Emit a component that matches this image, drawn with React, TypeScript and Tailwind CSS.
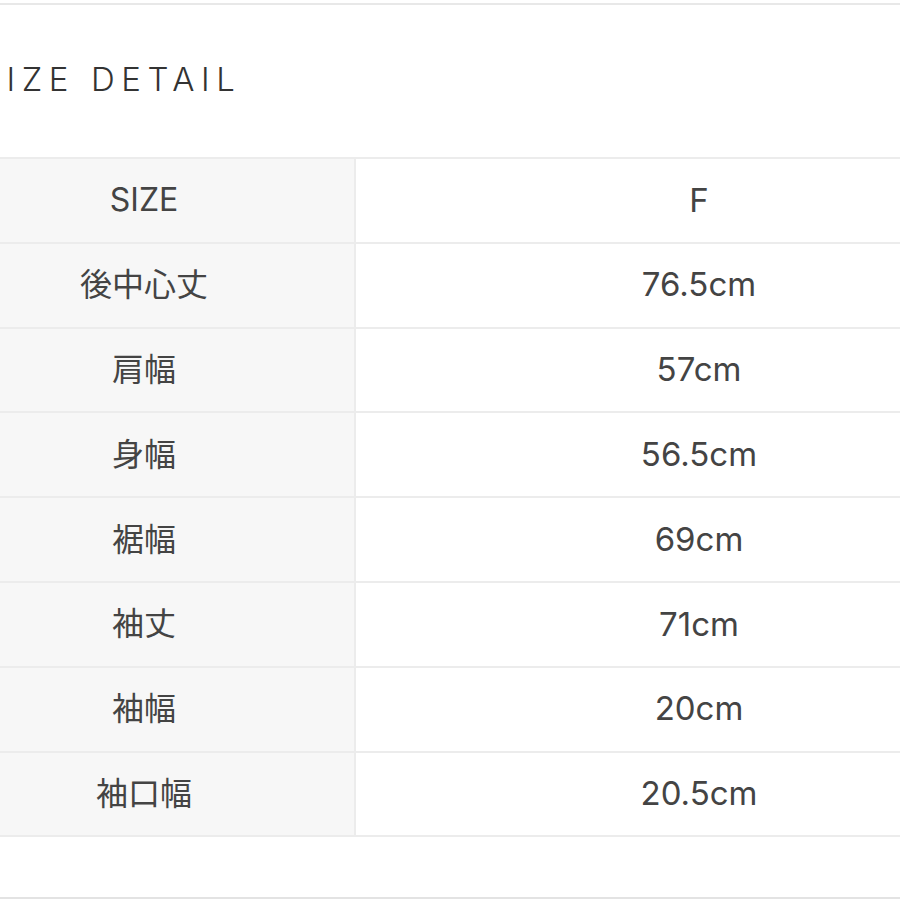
import React from 'react';

const rows: [string, string][] = [
  ['SIZE', 'F'],
  ['後中心丈', '76.5cm'],
  ['肩幅', '57cm'],
  ['身幅', '56.5cm'],
  ['裾幅', '69cm'],
  ['袖丈', '71cm'],
  ['袖幅', '20cm'],
  ['袖口幅', '20.5cm'],
];

const font = { fontFamily: '"Inter", "Noto Sans CJK JP", sans-serif' };

const App: React.FC = () => {
  return (
    <div className="w-[900px] h-[900px] bg-white overflow-hidden text-[#444444] flex flex-col" style={font}>
      <div className="h-[3px] shrink-0" />
      <div className="h-[2px] bg-[#e8e8e8] shrink-0" />

      {/* Title, the S is cropped at the left edge */}
      <div className="h-[152px] shrink-0 flex items-center">
        <h2 className="ml-[-21px] text-[33px] font-light text-[#333333] tracking-[0.2em] leading-none pb-[4px] whitespace-nowrap">
          SIZE DETAIL
        </h2>
      </div>

      {/* Table */}
      <div className="ml-[-66px] w-[1108px] border-t-2 border-[#ececec] shrink-0">
        {rows.map(([label, value]) => (
          <div key={label} className="flex h-[84.8px] border-b-2 border-[#ececec]">
            <div className="w-[422px] bg-[#f7f7f7] border-r-2 border-[#ececec] flex items-center justify-center text-[32px] font-normal">
              {label}
            </div>
            <div className="flex-1 flex items-center justify-center text-[33px] font-normal">
              {value}
            </div>
          </div>
        ))}
      </div>

      <div className="flex-1" />
      <div className="h-[2px] bg-[#e3e3e3] shrink-0 mb-[1px]" />
    </div>
  );
};

export default App;
